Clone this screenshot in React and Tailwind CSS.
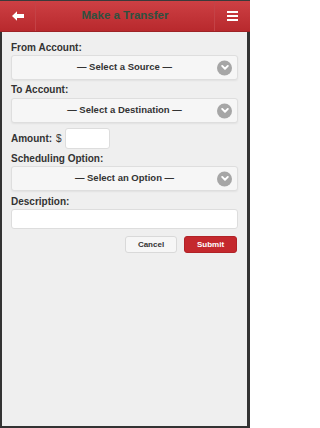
import React, { useState } from "react";

const Chevron = () => (
  <span className="absolute right-[5px] top-1/2 -translate-y-1/2 w-[15px] h-[15px] rounded-full bg-[#a6a6a6] flex items-center justify-center">
    <svg width="8" height="6" viewBox="0 0 10 7">
      <path d="M1.5 1.5 L5 5 L8.5 1.5" fill="none" stroke="#fff" strokeWidth="2.4" strokeLinecap="round" strokeLinejoin="round" />
    </svg>
  </span>
);

const SelectBox = ({ text }) => (
  <div className="relative h-[25px] bg-[#f6f6f6] border border-[#dedede] rounded-[3px] shadow-[0_1px_2px_rgba(0,0,0,0.06)] flex items-center justify-center">
    <span className="text-[9.5px] font-bold text-[#333]">{text}</span>
    <Chevron />
  </div>
);

const Label = ({ children, className = "" }) => (
  <div className={"text-[10px] font-bold text-[#333] leading-[12px] " + className}>{children}</div>
);

const App = () => {
  const [amount, setAmount] = useState("");
  const [desc, setDesc] = useState("");

  return (
    <div
      className="w-[250px] h-[428px] bg-[#333] pl-[2px] pr-[3px] pb-[2px] flex flex-col"
      style={{ fontFamily: '"Liberation Sans", Arial, sans-serif' }}
    >
      <div className="h-[32px] -ml-[2px] -mr-[3px] bg-[linear-gradient(#cd4044,#b8292d)] border-t border-[#3a3a3a] border-b border-b-[#9e2326] flex items-center">
        <div className="w-[36px] h-full flex items-center justify-center border-r border-[#c44246]">
          <svg width="14" height="12" viewBox="0 0 14 12">
            <path d="M1 6 L6 1.2 L6 4 L13 4 L13 8 L6 8 L6 10.8 Z" fill="#fff" />
          </svg>
        </div>
        <div className="flex-1 text-center text-[11.5px] font-bold text-[#2e5140]">Make a Transfer</div>
        <div className="w-[36px] h-full flex items-center justify-center border-l border-[#c44246]">
          <svg width="11" height="10" viewBox="0 0 11 10">
            <rect x="0" y="0" width="11" height="2" fill="#fff" />
            <rect x="0" y="4" width="11" height="2" fill="#fff" />
            <rect x="0" y="8" width="11" height="2" fill="#fff" />
          </svg>
        </div>
      </div>

      <div className="flex-1 bg-[#efefef] px-[9px] pt-[10px]">
        <Label className="mb-[1px]">From Account:</Label>
        <SelectBox text="— Select a Source —" />
        <Label className="mt-[4px] mb-[2px]">To Account:</Label>
        <SelectBox text="— Select a Destination —" />

        <div className="flex items-center mt-[5px]">
          <Label>Amount:</Label>
          <span className="ml-[4px] text-[10px] text-[#333]">$</span>
          <input
            value={amount}
            onChange={(e) => setAmount(e.target.value)}
            className="ml-[3px] w-[45px] h-[21px] bg-white border border-[#ddd] rounded-[3px] outline-none text-[10px] px-1"
          />
        </div>

        <Label className="mt-[4px] mb-[1px]">Scheduling Option:</Label>
        <SelectBox text="— Select an Option —" />

        <Label className="mt-[5px] mb-[1px]">Description:</Label>
        <input
          value={desc}
          onChange={(e) => setDesc(e.target.value)}
          className="w-full h-[20px] bg-white border border-[#ddd] rounded-[3px] outline-none text-[10px] px-1 block"
        />

        <div className="flex justify-end gap-[7px] mt-[7px] pr-[1px]">
          <button className="w-[52px] h-[17px] bg-[#f6f6f6] border border-[#d9d9d9] rounded-[3px] text-[8px] font-bold text-[#333]">
            Cancel
          </button>
          <button className="w-[53px] h-[17px] bg-[#c4282d] border border-[#b02227] rounded-[3px] text-[8px] font-bold text-white">
            Submit
          </button>
        </div>
      </div>
    </div>
  );
};

export default App;
